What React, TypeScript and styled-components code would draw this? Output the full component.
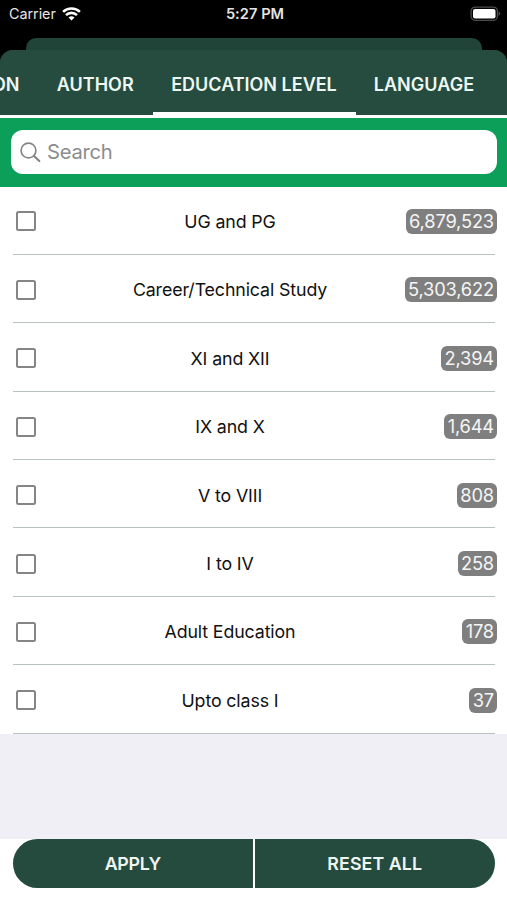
import React from 'react';
import styled, { createGlobalStyle } from 'styled-components';

const GlobalStyle = createGlobalStyle`
  * { box-sizing: border-box; }
  body { margin: 0; background: #000; font-family: Inter, "Liberation Sans", sans-serif; }
  button, input { font-family: inherit; }
`;

const Screen = styled.div`
  display: flex;
  flex-direction: column;
  width: 507px;
  height: 900px;
  overflow: hidden;
  background: #000;
`;

const StatusBar = styled.header`
  display: grid;
  grid-template-columns: 1fr auto 1fr;
  align-items: center;
  height: 27px;
  flex: none;
  padding: 0 6px 0 9px;
  margin-bottom: 11px;
  color: #e4e4e4;
`;

const Carrier = styled.div`
  display: flex;
  align-items: center;
  gap: 6px;
  font-size: 14.4px;
  letter-spacing: -0.06px;
`;

const Clock = styled.div`
  font-size: 14.6px;
  font-weight: 600;
  letter-spacing: 0.05px;
`;

const BatteryIcon = styled.svg`
  justify-self: end;
`;

const BackSheet = styled.div`
  flex: none;
  height: 12px;
  margin: 0 25px 0 25.5px;
  border-radius: 10px 10px 0 0;
  background: #214439;
`;

const Sheet = styled.main`
  flex: 1;
  display: flex;
  flex-direction: column;
  overflow: hidden;
  border-radius: 13px 13px 0 0;
  background: #264b3f;
`;

const TabBar = styled.nav`
  display: flex;
  flex: none;
  height: 68px;
  border-bottom: 3px solid #fff;
  background: #264b3f;
`;

const Tab = styled.button<{ $width: number; $active?: boolean; $end?: boolean; $tracking?: number }>`
  display: flex;
  flex: none;
  align-items: center;
  justify-content: ${(p) => (p.$end ? 'flex-end' : 'center')};
  width: ${(p) => p.$width}px;
  height: 65px;
  padding: ${(p) => (p.$end ? '6px 18.5px 0 0' : '6px 0 0')};
  border: 0;
  border-bottom: 3px solid ${(p) => (p.$active ? '#fff' : 'transparent')};
  background: none;
  color: #edf8f2;
  font-size: 18px;
  font-weight: 600;
  letter-spacing: ${(p) => p.$tracking ?? 0}px;
  white-space: nowrap;
`;

const SearchBar = styled.div`
  flex: none;
  height: 68.6px;
  padding: 12px 10px 12.5px 10.5px;
  background: #0c9f5a;
`;

const SearchField = styled.label`
  display: flex;
  align-items: center;
  height: 44px;
  padding-left: 9px;
  border-radius: 12px;
  background: #fff;
`;

const SearchInput = styled.input`
  flex: 1;
  margin: 0 0 1px 6.5px;
  padding: 0;
  border: 0;
  outline: 0;
  background: none;
  font-size: 20.2px;
  letter-spacing: -0.25px;
  &::placeholder { color: #8c8c8c; opacity: 1; }
`;

const List = styled.ul`
  flex: none;
  margin: 0;
  padding: 0;
  list-style: none;
  background: #fff;
`;

const Row = styled.li`
  display: grid;
  grid-template-columns: 100px 260px 1fr;
  align-items: center;
  height: 68.45px;
  padding: 1px 10px 0 0;
  background: linear-gradient(#b9c1c1, #b9c1c1) 13px 100% / 482px 1.3px no-repeat, #fff;
`;

const Checkbox = styled.span`
  width: 20px;
  height: 20px;
  margin-left: 16px;
  border: 2px solid #858585;
  border-radius: 2.5px;
`;

const Label = styled.span`
  color: #111;
  font-size: 17.8px;
  letter-spacing: -0.12px;
  text-align: center;
  white-space: nowrap;
`;

const Count = styled.span`
  justify-self: end;
  height: 25px;
  padding: 0 3px 0 3.4px;
  border-radius: 6px;
  background: #7f7f7f;
  color: #f5f5f5;
  font-size: 18.3px;
  line-height: 25px;
  letter-spacing: -0.17px;
`;

const EmptyArea = styled.div`
  flex: 1;
  background: #f0eff5;
`;

const Actions = styled.footer`
  display: grid;
  flex: none;
  grid-template-columns: 239.5px 239.5px;
  gap: 2.5px;
  height: 61.5px;
  padding: 0.5px 0 12.5px 13px;
  background: #fff;
`;

const ActionButton = styled.button<{ $side: 'left' | 'right' }>`
  padding: 0;
  border: 0;
  border-radius: ${(p) => (p.$side === 'left' ? '25px 0 0 25px' : '0 25px 25px 0')};
  background: #254b3e;
  color: #eef6f2;
  font-size: 17.8px;
  font-weight: 600;
  letter-spacing: ${(p) => (p.$side === 'left' ? -0.25 : 0.1)}px;
`;

const levels = [
  { name: 'UG and PG', count: '6,879,523' },
  { name: 'Career/Technical Study', count: '5,303,622' },
  { name: 'XI and XII', count: '2,394' },
  { name: 'IX and X', count: '1,644' },
  { name: 'V to VIII', count: '808' },
  { name: 'I to IV', count: '258' },
  { name: 'Adult Education', count: '178' },
  { name: 'Upto class I', count: '37' },
];

export default function App() {
  return (
    <>
      <GlobalStyle />
      <Screen>
        <StatusBar>
          <Carrier>
            Carrier
            <svg width="19" height="14" viewBox="0 0 19 14" fill="none" stroke="#fff" strokeWidth="2.6">
              <path d="M1.1 4.9a12.2 12.2 0 0 1 16.8 0" />
              <path d="M4 8.1a8 8 0 0 1 11 0" />
              <path d="M6.5 10.6a4.4 4.4 0 0 1 6 0l-3 3z" fill="#fff" stroke="none" />
            </svg>
          </Carrier>
          <Clock>5:27 PM</Clock>
          <BatteryIcon width="31" height="16" viewBox="0 0 31 16">
            <rect x="1.1" y="1.1" width="26.3" height="13.2" rx="4" fill="none" stroke="#4c4c4c" strokeWidth="1.3" />
            <rect x="3" y="2.9" width="22.5" height="9.6" rx="2" fill="#fff" />
            <path d="M28.6 5.3q3 2.3 0 4.6z" fill="#5c5c5c" />
          </BatteryIcon>
        </StatusBar>
        <BackSheet />
        <Sheet>
          <TabBar>
            <Tab $width={38} $end>ON</Tab>
            <Tab $width={114.5}>AUTHOR</Tab>
            <Tab $width={203} $active>EDUCATION LEVEL</Tab>
            <Tab $width={137} $tracking={0.05}>LANGUAGE</Tab>
          </TabBar>
          <SearchBar>
            <SearchField>
              <svg width="21" height="21" viewBox="0 0 21 21" fill="none" stroke="#858585" strokeWidth="1.7" strokeLinecap="round">
                <circle cx="8.5" cy="8.5" r="7.4" />
                <path d="M14 14l5.3 5.1" strokeWidth="2.1" />
              </svg>
              <SearchInput placeholder="Search" />
            </SearchField>
          </SearchBar>
          <List>
            {levels.map((level) => (
              <Row key={level.name}>
                <Checkbox />
                <Label>{level.name}</Label>
                <Count>{level.count}</Count>
              </Row>
            ))}
          </List>
          <EmptyArea />
          <Actions>
            <ActionButton $side="left">APPLY</ActionButton>
            <ActionButton $side="right">RESET ALL</ActionButton>
          </Actions>
        </Sheet>
      </Screen>
    </>
  );
}
